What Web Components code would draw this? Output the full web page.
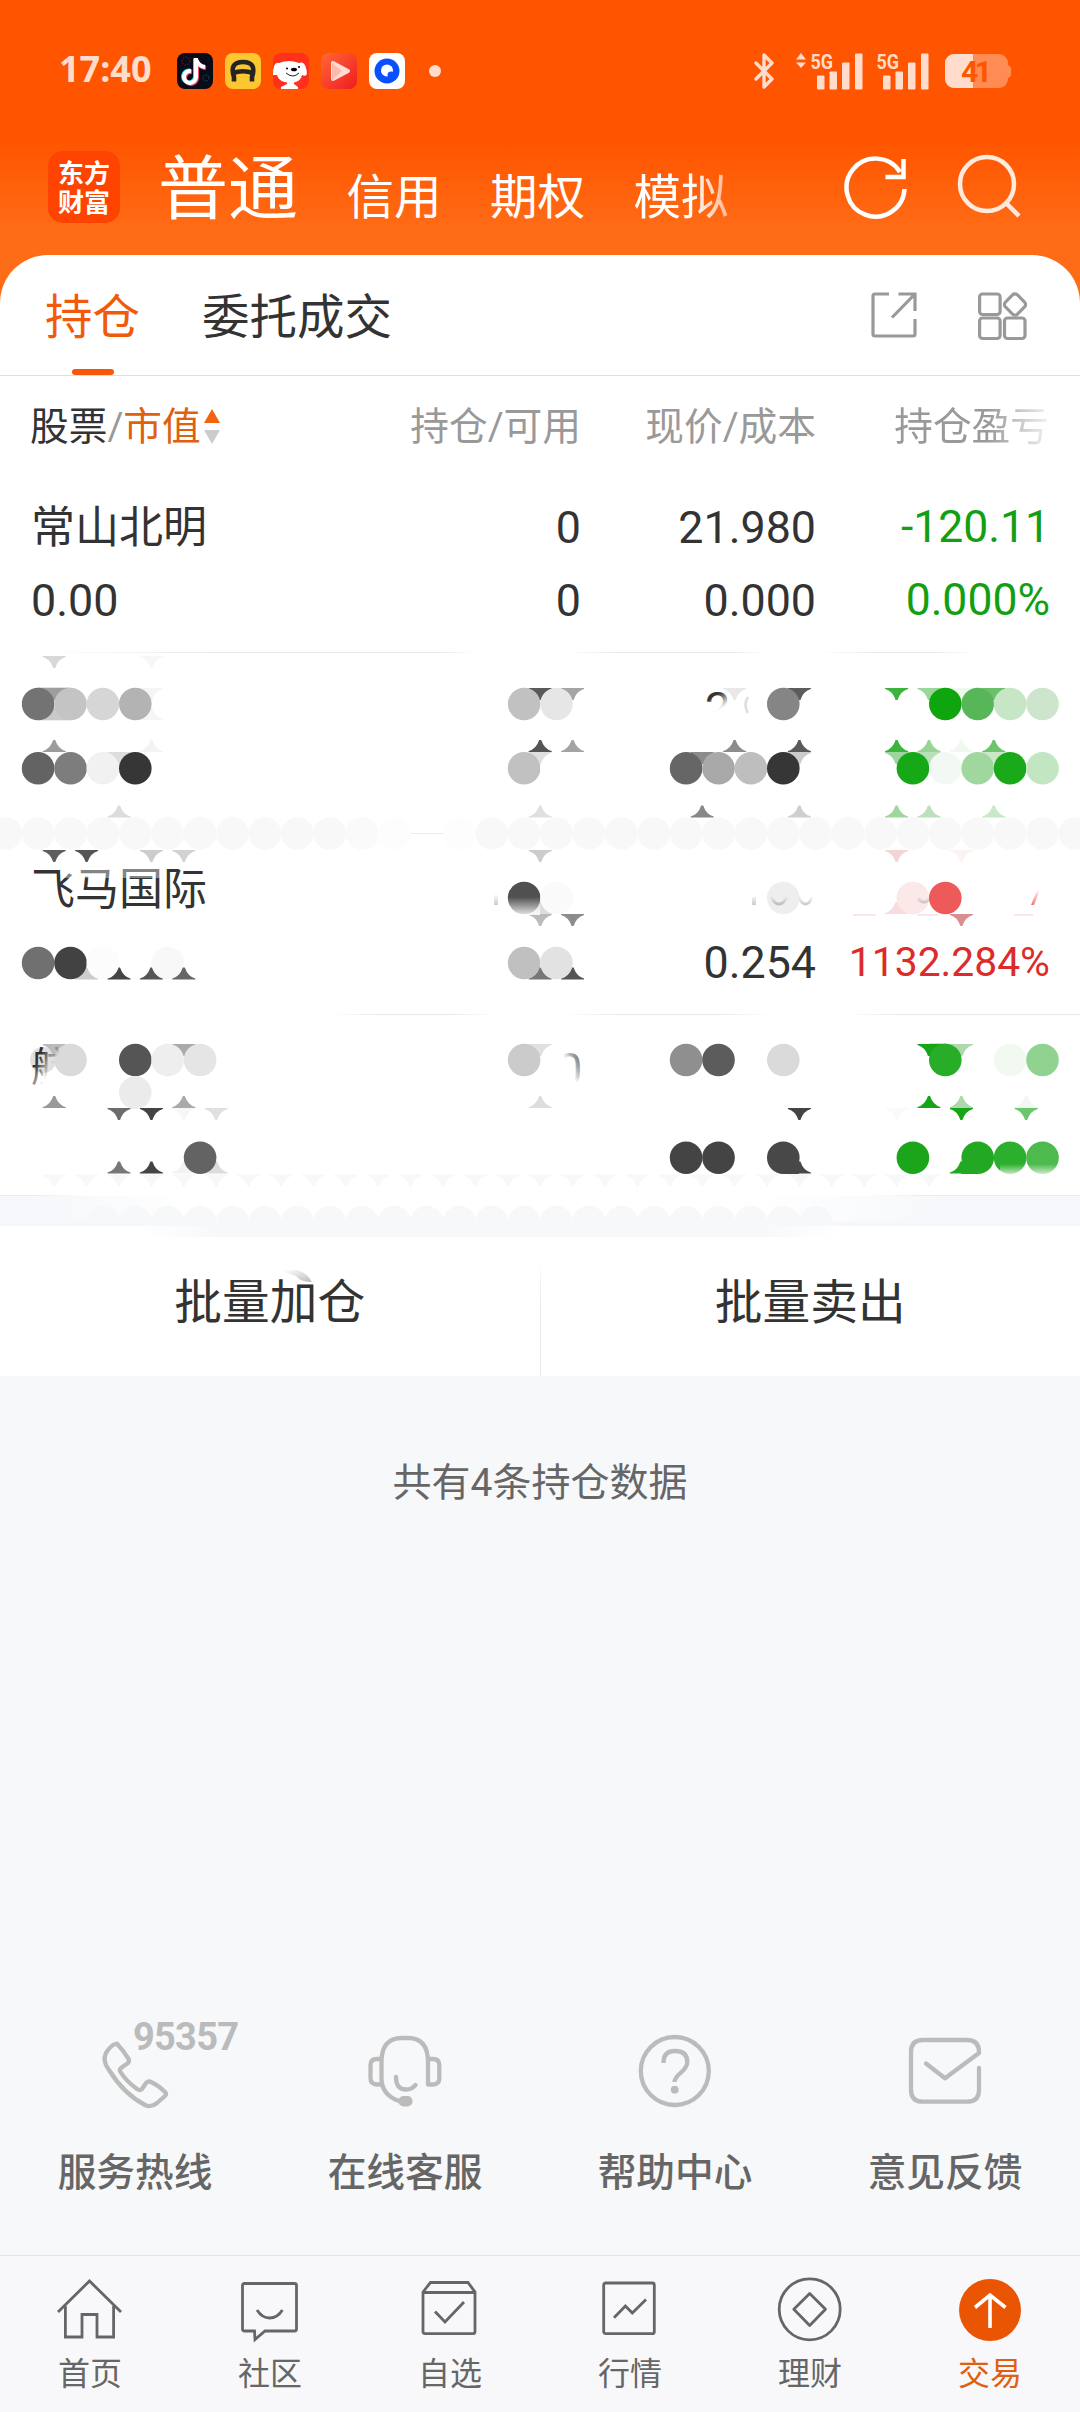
<!DOCTYPE html>
<html lang="zh-CN">
<head>
<meta charset="utf-8" />
<meta name="viewport" content="width=device-width, initial-scale=1" />
<title>持仓</title>
<style>
body {
	background: #f7f8fa;
	color: #333;
	font-family: Roboto, "Noto Sans CJK SC", sans-serif;
	margin: 0;
}
</style>
</head>

<body>
<trade-page>
	<status-bar slot="top" time="17:40" battery="41"></status-bar>
	<account-bar slot="top">
		<span slot="current">普通</span>
		<span>信用</span>
		<span>期权</span>
		<span class="cut">模拟</span>
	</account-bar>

	<sheet-tabs>
		<span slot="active">持仓</span>
		<span>委托成交</span>
	</sheet-tabs>

	<holdings-table>
		<holding-row name="常山北明" value="0.00" held="0" usable="0" price="21.980" cost="0.000" profit="-120.11" rate="0.000%" style="--tone: #12a012; --rule: linear-gradient(90deg, #fff 40px, #e8e8e8 220px 440px, #fff 475px 565px, #e8e8e8 620px 730px, #fff 765px 820px, #e8e8e8 880px 930px, #fff 975px)"></holding-row>
		<holding-row style="--rule: linear-gradient(90deg, #fff 350px, #eaeaea 400px 470px, #fff 510px)"></holding-row>
		<holding-row name="飞马国际" cost="0.254" rate="1132.284%" compact style="--tone: #dc2b2b; --rule: linear-gradient(90deg, #fff 330px, #e8e8e8 380px 450px, #fff 495px 565px, #e8e8e8 620px 720px, #fff 770px 845px, #e8e8e8 900px)"></holding-row>
		<holding-row style="--rule: linear-gradient(90deg, #eaeaea 30px, #fff 90px 860px, #eaeaea 920px)"></holding-row>
		<mosaic-layer slot="overlay"></mosaic-layer>
	</holdings-table>

	<batch-actions>
		<span slot="buy">批量加仓</span>
		<span slot="sell">批量卖出</span>
	</batch-actions>

	<list-note>共有4条持仓数据</list-note>

	<service-links slot="bottom">
		<service-link icon="phone">服务热线</service-link>
		<service-link icon="headset">在线客服</service-link>
		<service-link icon="help">帮助中心</service-link>
		<service-link icon="mail">意见反馈</service-link>
	</service-links>
	<nav-bar slot="bottom">
		<nav-item icon="home">首页</nav-item>
		<nav-item icon="chat">社区</nav-item>
		<nav-item icon="watch">自选</nav-item>
		<nav-item icon="market">行情</nav-item>
		<nav-item icon="wealth">理财</nav-item>
		<nav-item icon="trade" active>交易</nav-item>
	</nav-bar>
</trade-page>

<script>
const ICONS = {
	phone: `<path d="M115.5 29Q111 30 106 38Q102 46 109 55Q124 79 145 90Q151 93 157 88L165 81Q167 79 165 77Q158 70 150 66.500Q148 66 146 68L142 74Q140 76 137 74Q126 66 120.500 57Q119 55 121 53L128 48Q130 46 128 43Q123 35 118 30Q117 28 115.500 29Z"/>
		<text x="133" y="35" textLength="106" font-size="38" font-weight="700" fill="#bbb" stroke="none">95357</text>`,
	headset: `<path d="M129 86Q111.500 80 111.500 63V47Q111.500 23 132 23H138Q158 23 158 47V69.500H163Q169.300 69.500 169.300 63V50Q169.300 44 163 44H158M111.500 44H107Q100.500 44 100.500 50V63Q100.500 69.500 107 69.500H112M126 62Q126 74.500 136 74.500Q142 74.500 145.500 70"/>
		<rect x="128.500" y="81" width="14" height="10.500" rx="5" fill="#bbb" stroke="none"/>`,
	help: `<circle cx="134.800" cy="56" r="34"/><path stroke-linecap="butt" d="M123.500 48V46.500Q124 36 135 36Q147.300 36 147.300 47Q147.300 52 141 57.500Q134.500 63 134.500 67"/><circle cx="134.700" cy="74.700" r="3.900" fill="#bbb" stroke="none"/>`,
	mail: `<path d="M169 53V75Q169 86.700 157 86.700H113Q101 86.700 101 75V37Q101 25 113 25H157Q169 25 169 37V38L135 63.300L116 48.500"/>`,
	home: `<path d="M3 37L34.500 6L66 37M10.400 31V62H27V39.500H42V62H58.600V31"/>`,
	chat: `<path d="M9.500 8.500H59.500Q61.500 8.500 61.500 10.500V54Q61.500 56 59.500 56H30L20 64.500L19.500 56H9.500Q7.500 56 7.500 54V10.500Q7.500 8.500 9.500 8.500ZM22 35Q27 43 34.600 43Q42.500 43 47.400 35"/>`,
	watch: `<path d="M8 17L15.500 7.500H53L60 17V56.500Q60 58.700 58 58.700H10Q8 58.700 8 56.500ZM8 17.500H60M20 36.500L30 47L49 27"/>`,
	market: `<rect x="8.700" y="8" width="50.600" height="50.700" rx="2"/><path d="M19 42.700L30.400 31L37.300 38L51 24.500"/>`,
	wealth: `<circle cx="34.700" cy="34.300" r="30.500"/><path stroke-linejoin="round" d="M34.700 18.500L50.500 34.300L34.700 50.500L18.800 34.300Z"/>`,
	trade: `<circle cx="35" cy="35" r="31" fill="#ea5504" stroke="none"/><path d="M35 20V53M20 32.500L35 20L50.500 32.500" stroke="#fff" stroke-width="3.600"/>`
};

class BaseElement extends HTMLElement {
	connectedCallback() {
		if (!this.shadowRoot) {
			this.attachShadow({ mode: 'open' }).innerHTML = this.render();
		}
	}

	attr(name) {
		return this.getAttribute(name) || '';
	}
}

window.customElements.define('trade-page', class extends BaseElement {
	render() {
		return `<style>
:host {
	background: linear-gradient(#ff5500 142px, #ff6c17 232px, #ff6c17 310px, #f7f8fa 310px);
	display: flex;
	flex-direction: column;
	height: 2412px;
	overflow: hidden;
}

main {
	flex: 1;
}
</style>
<slot name="top"></slot>
<main><slot></slot></main>
<slot name="bottom"></slot>`;
	}
});

window.customElements.define('status-bar', class extends BaseElement {
	signal(arrows) {
		return `<svg width="${arrows ? 67 : 54}" height="38" viewBox="${arrows ? 0 : 13} 0 ${arrows ? 67 : 54} 38" fill="currentColor">
	${arrows ? '<path d="M0 7.500L5 1L10 7.500ZM0 10.500H10L5 16Z"/>' : ''}
	<text x="14.500" y="16.500" font-size="20" font-weight="700" textLength="22.500" lengthAdjust="spacingAndGlyphs">5G</text>
	<rect x="21" y="23.500" width="7.500" height="14" rx="1"/><rect x="33.500" y="19.500" width="7.500" height="18" rx="1"/>
	<rect x="46" y="10.500" width="7.500" height="27" rx="1"/><rect x="59" y="1.500" width="7.500" height="36" rx="1"/>
</svg>`;
	}

	render() {
		return `<style>
:host {
	align-items: flex-start;
	box-sizing: border-box;
	color: #ffdccc;
	display: flex;
	height: 142px;
	justify-content: space-between;
	padding: 51px 68px 0 59px;
}

div {
	align-items: center;
	display: flex;
	height: 39px;
}

time {
	font: 700 36px/36px "Noto Sans", sans-serif;
	height: 39px;
	width: 118px;
}

.apps {
	gap: 12px;
}

.dot {
	background: currentColor;
	border-radius: 50%;
	height: 12px;
	margin-left: 12px;
	width: 12px;
}

svg {
	display: block;
	overflow: visible;
}
</style>
<div>
	<time>${this.attr('time')}</time>
	<div class="apps">
	<svg width="36" height="36" viewBox="0 0 36 36"><rect width="36" height="36" rx="8" fill="#090b18"/><path d="M19 6V24A6 6 0 1 1 14 18" transform="translate(-1 -.5)" fill="none" stroke="#25e5e5" stroke-width="4"/><path d="M19 6V24A6 6 0 1 1 14 18M19 7Q21 13 28 14" transform="translate(1 1)" fill="none" stroke="#f34b68" stroke-width="4"/><path d="M19 5V24A6 6 0 1 1 14 18M19 6Q21 13 28 14" fill="none" stroke="#fff" stroke-width="4"/><circle cx="9" cy="8" r="4" fill="none" stroke="#742337" stroke-dasharray="1.500 1.500"/><circle cx="29" cy="25" r="3" fill="none" stroke="#126579" stroke-dasharray="1 1"/></svg>
	<svg width="36" height="36" viewBox="0 0 36 36"><rect width="36" height="36" rx="8" fill="#fdc731"/><path d="M9 28.500L9 24Q4 9 18 9Q32 9 27 24L27 28.500M8 20Q18 16.500 28 20" fill="none" stroke="#242422" stroke-width="4.600"/></svg>
	<svg width="36" height="36" viewBox="0 0 36 36"><rect width="36" height="36" rx="8" fill="#ff301c"/><path d="M6 10Q0 8 0 22L4 22Q6 29 14 29.500V31L8 34V36H25V34L21 31V29.500Q28 28 29 22Q36 25 33 15Q31 8 26 10Q16 6 6 10Z" fill="#fff"/><ellipse cx="21" cy="16.500" rx="3" ry="1.800"/><circle cx="14" cy="15.500" r="1"/><circle cx="26" cy="14" r="1"/><path d="M13 20Q20 26 26 20" fill="none" stroke="#222"/></svg>
	<svg width="36" height="36" viewBox="0 0 36 36"><defs><linearGradient id="v" x2="1" y2="1"><stop stop-color="#ff6838"/><stop offset="1" stop-color="#f01b20"/></linearGradient></defs><rect width="36" height="36" rx="8" fill="url(#v)"/><path d="M12 10V26L27 18Z" fill="#ffdcd7" stroke="#ffdcd7" stroke-width="4" stroke-linejoin="round"/><path d="M11 10V27L21 18Z" fill="#ffb8ac"/></svg>
	<svg width="36" height="36" viewBox="0 0 36 36"><rect width="36" height="36" rx="8" fill="#fff"/><circle cx="18" cy="18" r="12.500" fill="#0b50ff"/><circle cx="18" cy="17.500" r="6" fill="#fff"/><circle cx="22" cy="22" r="3.500" fill="#0b50ff"/></svg>
	<span class="dot"></span>
	</div>
</div>
<div>
	<svg width="22" height="38" viewBox="0 0 22 38" fill="none" stroke="currentColor" stroke-width="3.400" stroke-linejoin="round" stroke-linecap="round"><path d="M2 11L18 27L10 35V3L18 11L2 27"/></svg>
	<div style="margin-left: 20px">${this.signal(true)}</div>
	<div style="margin-left: 12px">${this.signal(false)}</div>
	<svg style="margin-left: 16px" width="67" height="36" viewBox="0 0 67 36"><defs><clipPath id="b"><rect y="1" width="63" height="34" rx="9"/></clipPath></defs><g clip-path="url(#b)"><rect width="63" height="36" fill="#ff8c52"/><rect width="28" height="36" fill="#ffdccc"/></g><path d="M63 12Q66 13 66 16V21Q66 24 63 25Z" fill="#ff8c52"/><text x="16" y="29" font-size="30" font-weight="700" textLength="31" fill="#ff5500">${this.attr('battery')}</text></svg>
</div>`;
	}
});

window.customElements.define('account-bar', class extends BaseElement {
	render() {
		return `<style>
:host {
	box-sizing: border-box;
	color: #fff;
	display: flex;
	height: 113px;
	padding: 9px 54px 0 48px;
}

.logo {
	background: #ff4300;
	border-radius: 15px;
	box-sizing: border-box;
	font: 700 26px/29px "Noto Sans CJK SC", sans-serif;
	height: 72px;
	padding-top: 6px;
	text-align: center;
	width: 72px;
}

nav {
	align-items: baseline;
	display: flex;
	flex: 1;
	font-size: 47.5px;
	gap: 48.5px;
	line-height: 79px;
	padding-left: 38px;
}

::slotted([slot="current"]) {
	font-size: 70px;
}

::slotted(.cut) {
	-webkit-mask-image: linear-gradient(90deg, #000 60%, #0008);
	mask-image: linear-gradient(90deg, #000 60%, #0008);
}

svg {
	fill: none;
	stroke: #fff;
	stroke-width: 4.500;
}
</style>
<div class="logo">东方<br>财富</div>
<nav><slot name="current"></slot><slot></slot></nav>
<svg width="182" height="80" viewBox="844 151 182 80"><path d="M904.500 189A29 29 0 1 1 900 172M903.500 159V177H885.500"/><g stroke="#ffeade"><circle cx="987" cy="184" r="27"/><path d="M1006 203L1019 216"/></g></svg>`;
	}
});

window.customElements.define('sheet-tabs', class extends BaseElement {
	render() {
		return `<style>
:host {
	background: #fff;
	border-bottom: 1px solid #e0e0e0;
	border-radius: 48px 48px 0 0;
	box-sizing: border-box;
	display: flex;
	font-size: 47.5px;
	gap: 62px;
	height: 121px;
	line-height: 126px;
	padding: 0 45px;
}

.active {
	color: #f15a0b;
	height: 120px;
	position: relative;
}

.active::after {
	background: #f8570b;
	border-radius: 3px;
	bottom: 0;
	content: '';
	height: 6px;
	left: 27px;
	position: absolute;
	width: 42px;
}

svg {
	fill: none;
	margin: 34px 6px 0 auto;
	stroke: #999;
	stroke-width: 3.200;
}
</style>
<div class="active"><slot name="active"></slot></div>
<slot></slot>
<svg width="160" height="54" viewBox="869 289 160 54"><path d="M889 294H875Q873 294 873 296V334Q873 336 875 336H913Q915 336 915 334V319M898.500 294H915V311M914 295L892 317.500"/><rect x="979.600" y="294" width="20.500" height="20.500" rx="3"/><rect x="979.600" y="318" width="20.500" height="20.500" rx="3"/><rect x="1004.500" y="318" width="20.500" height="20.500" rx="3"/><rect x="1006.500" y="296" width="17" height="17" rx="3.500" transform="rotate(45 1015 304.500)"/></svg>`;
	}
});

window.customElements.define('holdings-table', class extends BaseElement {
	render() {
		return `<style>
:host {
	background: #fff;
	display: block;
	position: relative;
}

header {
	color: #999;
	display: grid;
	font-size: 38.7px;
	grid-template-columns: 250px 301px 235px 1fr;
	height: 96px;
	line-height: 102px;
	padding: 0 31px 0 30px;
	text-align: right;
	white-space: nowrap;
}

.first {
	align-items: center;
	display: flex;
}

b {
	color: #333;
	font-weight: 400;
}

em {
	color: #e0600f;
	font-style: normal;
}

.cut {
	-webkit-mask-image: linear-gradient(90deg, #000 60%, #0002);
	mask-image: linear-gradient(90deg, #000 60%, #0002);
}
</style>
<header>
	<div class="first"><b>股票</b>/<em>市值</em><svg width="18" height="36" viewBox="0 0 18 36" style="margin-left: 2px"><path d="M1 14L9 0L17 14Z" fill="#f2640f"/><path d="M1 21H17L9 35Z" fill="#ccc"/></svg></div>
	<div>持仓/可用</div>
	<div>现价/成本</div>
	<div><span class="cut">持仓盈亏</span></div>
</header>
<slot></slot>
<slot name="overlay"></slot>`;
	}
});

window.customElements.define('holding-row', class extends BaseElement {
	render() {
		return `<style>
:host {
	background: var(--rule) bottom / 100% 1px no-repeat;
	box-sizing: border-box;
	display: grid;
	font-size: 44.8px;
	grid-template-columns: 250px 300px 235px 1fr;
	grid-template-rows: 73px 73px;
	height: 181px;
	line-height: 73px;
	padding: 19px 30px 0 31px;
	text-align: right;
	white-space: nowrap;
}

.left {
	text-align: left;
}

.name {
	font-size: 44px;
	line-height: 75px;
}

.tone {
	color: var(--tone);
	font-size: 44.5px;
}

:host([compact]) .tone {
	font-size: 40.8px;
}
</style>
<span class="left name">${this.attr('name')}</span><span>${this.attr('held')}</span><span>${this.attr('price')}</span><span class="tone">${this.attr('profit')}</span>
<span class="left">${this.attr('value')}</span><span>${this.attr('usable')}</span><span>${this.attr('cost')}</span><span class="tone">${this.attr('rate')}</span>`;
	}
});

// Round-dot mosaic that hides private figures. Dots sit on a 32.4px grid,
// slivers are the leftovers of the gaps between four neighbouring dots.
window.customElements.define('mosaic-layer', class extends BaseElement {
	dots(y, list) {
		return Object.entries(list).map(([col, fill]) => `<circle cx="${38.1 + 32.4 * col}" cy="${y}" r="16.300" fill="${fill}"/>`).join('');
	}

	slivers(y, dir, list) {
		return Object.entries(list).map(([col, fill]) => `<path transform="translate(${54.2 + 32.4 * col} ${y}) scale(1 ${dir})" d="M-11.500 0H11.500V1Q4 3 1 12H-1Q-4 3 -11.500 1Z" fill="${fill}"/>`).join('');
	}

	fill(from, to, color) {
		const list = {};
		for (let i = from; i <= to; i++) {
			list[i] = color;
		}
		return list;
	}

	render() {
		const up = -1;
		const down = 1;

		return `<style>
:host {
	display: block;
	left: 0;
	pointer-events: none;
	position: absolute;
	top: 0;
	z-index: 1;
}

svg {
	display: block;
}
</style>
<svg width="1080" height="924" viewBox="0 376 1080 924">
<defs>
	<linearGradient id="edge"><stop stop-color="#fff" stop-opacity="0"/><stop offset=".15" stop-color="#fff"/><stop offset=".8" stop-color="#fff"/><stop offset="1" stop-color="#fff" stop-opacity="0"/></linearGradient>
	<linearGradient id="band"><stop stop-color="#f6f8fa" stop-opacity="0"/><stop offset=".12" stop-color="#f6f8fa"/><stop offset=".88" stop-color="#f6f8fa"/><stop offset="1" stop-color="#f6f8fa" stop-opacity="0"/></linearGradient>
	<linearGradient id="fade" x2=".3" y2="1"><stop offset=".35" stop-color="#333"/><stop offset=".65" stop-color="#333" stop-opacity="0"/></linearGradient>
	<linearGradient id="side" x2=".8" y2=".5"><stop offset=".35" stop-color="#333"/><stop offset=".75" stop-color="#333" stop-opacity="0"/></linearGradient>
	<linearGradient id="arc" x1="0" y1="1" x2="1" y2="0"><stop offset=".5" stop-color="#333" stop-opacity="0"/><stop offset=".9" stop-color="#555"/></linearGradient>
	<linearGradient id="ghost" x2="0" y2="1"><stop stop-color="#555" stop-opacity="0"/><stop offset="1" stop-color="#555" stop-opacity=".3"/></linearGradient>
	<linearGradient id="slash" x2="0" y2="1"><stop stop-color="#e55" stop-opacity="0"/><stop offset="1" stop-color="#e55" stop-opacity=".8"/></linearGradient>
	<linearGradient id="curl" x2="1" y2="1"><stop offset=".1" stop-color="#777" stop-opacity="0"/><stop offset="1" stop-color="#777" stop-opacity=".5"/></linearGradient>
	<linearGradient id="veil" x2="0" y2="1"><stop stop-color="#fff" stop-opacity="0"/><stop offset="1" stop-color="#fff" stop-opacity=".85"/></linearGradient>
	<clipPath id="strip"><rect y="1195" width="1080" height="31"/></clipPath>
</defs>
${this.slivers(656, down, { 0: '#d8d8d8', 3: '#f7f7f7' })}
${this.slivers(688, down, { 0: '#9e9e9e', 3: '#f5f5f5', 15: '#5a5a5a', 16: '#a5a5a5', 21: '#e8e8e8', 23: '#5c5c5c', 26: '#3db33d', 27: '#9bd69b', 28: '#eff8ef', 29: '#6cc06c' })}
<path d="M38 687.700H70V700H38Z" fill="#9e9e9e"/><path d="M38 708H70V720.300H38Z" fill="#cacaca"/>
${this.slivers(720, up, { 3: '#f6f6f6' })}
${this.dots(704, { 0: '#737373', 1: '#c4c4c4', 2: '#d6d6d6', 3: '#b3b3b3', 15: '#c1c1c1', 16: '#e6e6e6', 23: '#858585', 28: '#0fa50f', 29: '#57b657', 30: '#c6e6c6', 31: '#cce5cc' })}
<text x="705" y="723.500" font-size="45" fill="url(#fade)">2</text>
<path d="M748 697Q743 705 748 713" fill="none" stroke="#ddd" stroke-width="2.500"/>
${this.slivers(752, up, { 0: '#9c9c9c', 3: '#f3f3f3', 15: '#555', 16: '#a4a4a4', 21: '#8c8c8c', 23: '#5a5a5a', 26: '#3db33d', 27: '#98d498', 28: '#f0f8f0', 29: '#6cc46c' })}
${this.slivers(752, down, { 2: '#ddd', 15: '#e0e0e0', 20: '#8b8b8b', 23: '#ccc', 26: '#9ed49e', 27: '#b8e0b8', 29: '#c8e8c8' })}
${this.dots(768.3, { 0: '#636363', 1: '#7d7d7d', 2: '#f1f1f1', 3: '#363636', 15: '#c1c1c1', 16: '#fff', 20: '#666', 21: '#a8a8a8', 22: '#bebebe', 23: '#363636', 27: '#17a817', 28: '#f2f9f4', 29: '#9fd79f', 30: '#19a919', 31: '#c2e6c2' })}
${this.slivers(817.5, up, { 2: '#dcdcdc', 15: '#e0e0e0', 20: '#888', 23: '#cfcfcf', 26: '#9ed69e', 27: '#bce0bc', 29: '#c8e8c8' })}
${this.dots(833.5, { ...this.fill(-1, 9, '#f8f8f8'), 10: '#fafafa', 11: '#fdfdfd', 13: '#fdfdfd', ...this.fill(14, 32, '#f8f8f8') })}
${this.slivers(850, down, { 0: '#5e5e5e', 1: '#555', 3: '#ccc', 4: '#d2d2d2', 15: '#ccc', 26: '#f3d5d5', 28: '#fcf3f3' })}
<rect x="64" y="866" width="96" height="12" fill="#fff" opacity=".4"/>

${this.slivers(914, down, { 15: '#bbb', 16: '#8c8c8c', 28: '#d98f8f' })}
${this.slivers(914, up, { 15: '#ddd', 26: '#f8dcdc' })}
${this.dots(898, { 15: '#505050', 16: '#fafafa', 23: '#eee', 27: '#fbe8e8', 28: '#ee5a5a' })}
<rect x="506" y="897" width="34" height="18" fill="url(#veil)"/>
<path d="M494 894H498V905H494ZM752 897H756V905H752Z" fill="url(#ghost)"/>
<path d="M771 896Q774 904 779 904T787 896M799 896Q801 904 805.500 904T812 896M918 898Q924 906 930 898" fill="none" stroke="url(#ghost)" stroke-width="3"/>
<path d="M1031 905H1034L1040 890H1037Z" fill="url(#slash)"/>
<path d="M853 915H876M917 915H938M1014 915H1033" stroke="#fae8e8" stroke-width="2"/>
${this.slivers(979.5, up, { 1: '#ccc', 2: '#444', 3: '#555', 15: '#777', 16: '#555' })}
${this.dots(963, { 0: '#707070', 1: '#424242', 2: '#fcfcfc', 4: '#f8f8f8', 15: '#c0c0c0', 16: '#e2e2e2' })}
${this.slivers(979.5, up, { 4: '#666' })}

${this.slivers(1044, down, { 0: '#bbb', 4: '#aaa', 15: '#e0e0e0', 27: '#16a516', 28: '#aed8ae' })}
<path d="M929 1043.700H946V1060H936Z" fill="#16a516"/>
<circle cx="43" cy="1060" r="13" fill="#bbb" opacity=".45"/>
${this.dots(1060, { 1: '#dadada', 3: '#555', 4: '#eee', 5: '#e5e5e5', 15: '#cbcbcb', 20: '#8f8f8f', 21: '#5c5c5c', 23: '#dadada', 28: '#28ad28', 30: '#f1f9f1', 31: '#90d290' })}
<text x="31" y="1081" font-size="40" fill="url(#side)">航</text>
<text x="557" y="1085" font-size="45" fill="url(#arc)">0</text>
${this.dots(1092.6, { 3: '#ebebeb' })}
${this.slivers(1108, up, { 0: '#999', 4: '#aaa', 15: '#ddd', 27: '#16a516', 28: '#acd8ac', 30: '#f0f8f0' })}
${this.slivers(1108, down, { 2: '#6c6c6c', 3: '#444', 4: '#f7f7f7', 5: '#e0e0e0', 23: '#444', 26: '#f7fcf7', 28: '#16a516', 30: '#6cc66c' })}
${this.slivers(1173.5, up, { 2: '#777', 3: '#444', 4: '#f3f3f3', 5: '#ddd', 23: '#484848', 28: '#22a822' })}
<path d="M783 1174H799L795 1160H783Z" fill="#484848"/><path d="M961 1174H978V1158H967Z" fill="#22a822"/>
${this.dots(1157.7, { 5: '#636363', 20: '#444', 21: '#444', 23: '#484848', 27: '#1ba51b', 29: '#22a822', 30: '#2caf2c', 31: '#4cba4c' })}
<rect x="1000" y="1164" width="60" height="12" fill="url(#veil)"/>
${this.slivers(1174.5, down, this.fill(0, 27, '#f6f8fa'))}

<rect x="50" y="1195" width="890" height="27" fill="url(#edge)"/>
<g clip-path="url(#strip)">${this.dots(1222, this.fill(2, 24, '#f6f8fa'))}</g>
<rect x="140" y="1221" width="700" height="16" fill="url(#band)"/>
<rect x="50" y="1221" width="900" height="5" fill="#f6f8fa"/>
<path d="M278 1270H298Q308 1274 312 1282Q300 1282 296 1276Z" fill="url(#curl)"/>
</svg>`;
	}
});

window.customElements.define('batch-actions', class extends BaseElement {
	render() {
		return `<style>
:host {
	background: #fff;
	border-top: 30px solid #f6f8fb;
	display: flex;
	font-size: 47.7px;
	height: 150px;
	line-height: 155px;
	text-align: center;
}

div {
	flex: 1;
}

i {
	background: linear-gradient(#fff 30px, #e8e8e8 80px);
	width: 1px;
}
</style>
<div><slot name="buy"></slot></div><i></i><div><slot name="sell"></slot></div>`;
	}
});

window.customElements.define('list-note', class extends BaseElement {
	render() {
		return `<style>
:host {
	color: #666;
	display: block;
	font-size: 39px;
	line-height: 60px;
	padding-top: 77px;
	text-align: center;
}
</style>
<slot></slot>`;
	}
});

window.customElements.define('service-links', class extends BaseElement {
	render() {
		return `<style>
:host {
	display: flex;
	height: 240px;
}
</style>
<slot></slot>`;
	}
});

window.customElements.define('service-link', class extends BaseElement {
	render() {
		return `<style>
:host {
	color: #666;
	flex: 1;
	font-size: 38.7px;
	font-weight: 500;
	line-height: 60px;
	text-align: center;
}

svg {
	display: block;
	fill: none;
	margin-bottom: 18px;
	stroke: #bbb;
	stroke-linecap: round;
	stroke-linejoin: round;
	stroke-width: 4.300;
}
</style>
<svg width="270" height="110" viewBox="0 0 270 110">${ICONS[this.attr('icon')]}</svg>
<slot></slot>`;
	}
});

window.customElements.define('nav-bar', class extends BaseElement {
	render() {
		return `<style>
:host {
	background: #f8f8fa;
	border-top: 1px solid #e2e4e6;
	box-sizing: border-box;
	display: flex;
	height: 157px;
	padding-top: 19px;
}
</style>
<slot></slot>`;
	}
});

window.customElements.define('nav-item', class extends BaseElement {
	render() {
		return `<style>
:host {
	align-items: center;
	color: #666;
	display: flex;
	flex: 1;
	flex-direction: column;
	font-size: 32px;
	line-height: 40px;
}

:host([active]) {
	color: #e0600f;
}

svg {
	fill: none;
	margin-bottom: 9px;
	stroke: #666;
	stroke-width: 2.800;
}
</style>
<svg width="70" height="70" viewBox="0 0 70 70">${ICONS[this.attr('icon')]}</svg>
<slot></slot>`;
	}
});
</script>
</body>
</html>
